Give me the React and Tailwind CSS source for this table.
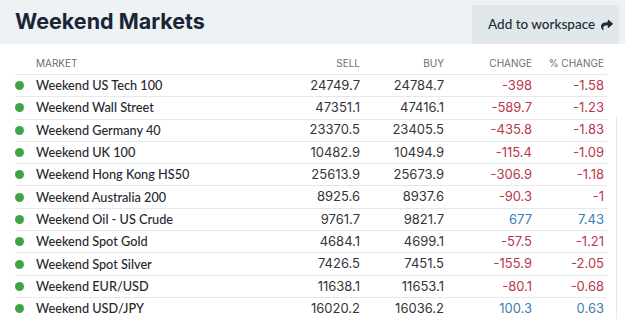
import { useState } from 'react'

const rows = [
  ['Weekend US Tech 100', '24749.7', '24784.7', '-398', '-1.58'],
  ['Weekend Wall Street', '47351.1', '47416.1', '-589.7', '-1.23'],
  ['Weekend Germany 40', '23370.5', '23405.5', '-435.8', '-1.83'],
  ['Weekend UK 100', '10482.9', '10494.9', '-115.4', '-1.09'],
  ['Weekend Hong Kong HS50', '25613.9', '25673.9', '-306.9', '-1.18'],
  ['Weekend Australia 200', '8925.6', '8937.6', '-90.3', '-1'],
  ['Weekend Oil - US Crude', '9761.7', '9821.7', '677', '7.43'],
  ['Weekend Spot Gold', '4684.1', '4699.1', '-57.5', '-1.21'],
  ['Weekend Spot Silver', '7426.5', '7451.5', '-155.9', '-2.05'],
  ['Weekend EUR/USD', '11638.1', '11653.1', '-80.1', '-0.68'],
  ['Weekend USD/JPY', '16020.2', '16036.2', '100.3', '0.63'],
]

function ShareIcon() {
  return (
    <svg viewBox="0 0 512 512" className="w-[12px] h-[12px]" fill="currentColor">
      <path d="M503.7 189.8L327.7 37.9C312.3 24.5 288 35.3 288 56v80.1C127.4 137.9 0 170.1 0 322.3c0 61.4 39.6 122.3 83.3 154.1 13.7 9.9 33.1-2.5 28.1-18.6C66 312.5 133.4 272.8 288 270.6V358c0 20.7 24.3 31.5 39.7 18.2l176-152c11.1-9.6 11.1-26.8 0-36.4z" />
    </svg>
  )
}

export default function App() {
  const [hover, setHover] = useState(-1)

  return (
    <div className="w-[625px] h-[320px] overflow-hidden bg-white" style={{ fontFamily: 'Inter, "Noto Sans", sans-serif' }}>
      {/* Header */}
      <div className="h-[44px] bg-[#eef2f4] flex items-end justify-between pl-[15px] pr-[6px]">
        <h1 className="self-center text-[21.5px] font-bold text-[#1a2535] leading-none">
          Weekend Markets
        </h1>
        <button
          className="h-[39px] w-[147px] bg-[#e1e8eb] flex items-center pl-[16px] gap-[6px] text-[13.5px] font-medium text-[#222a33]"
          style={{ fontFamily: 'Lato, sans-serif' }}
        >
          Add to workspace
          <ShareIcon />
        </button>
      </div>

      {/* Table */}
      <div className="flex">
        <div className="w-[592px] ml-[15px] pt-[9px]">
          <div className="flex items-center h-[21px] text-[10px] text-[#6b6f75] uppercase">
            <div className="flex-1 pl-[21px]">Market</div>
            <div className="w-[80px] text-right">Sell</div>
            <div className="w-[84px] text-right">Buy</div>
            <div className="w-[88px] text-right">Change</div>
            <div className="w-[75px] text-right pr-[3px]">% Change</div>
          </div>
          {rows.map((r, i) => {
            const up = !r[3].startsWith('-')
            const tone = up ? 'text-[#3b80b5]' : 'text-[#b9374c]'
            return (
              <div
                key={i}
                onMouseEnter={() => setHover(i)}
                onMouseLeave={() => setHover(-1)}
                className={`flex items-center h-[22.3px] border-t border-[#e6e8ea] text-[13px] ${hover === i ? 'bg-gray-50' : ''}`}
              >
                <span className="w-[9px] h-[9px] rounded-full bg-[#3da548] mr-[12px]" />
                <div className="flex-1 text-[12.7px] font-medium text-[#26282e]" style={{ fontFamily: 'Lato, sans-serif' }}>
                  {r[0]}
                </div>
                <div className="w-[80px] text-right text-[#33353a]">{r[1]}</div>
                <div className="w-[84px] text-right text-[#33353a]">{r[2]}</div>
                <div className={`w-[88px] text-right ${tone}`}>{r[3]}</div>
                <div className={`w-[75px] text-right pr-[3px] ${tone}`}>{r[4]}</div>
              </div>
            )
          })}
        </div>
        <div className="ml-[9px] mt-[73px] border-l border-[#e6e8ea]" />
      </div>
    </div>
  )
}
